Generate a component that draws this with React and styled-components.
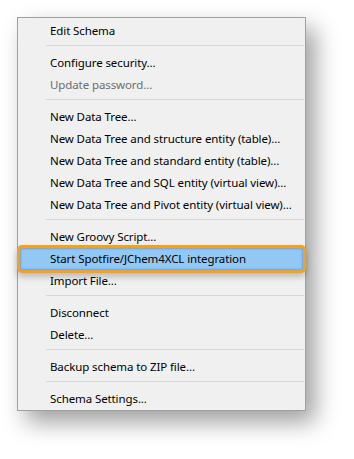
import React from "react";
import styled, { createGlobalStyle } from "styled-components";

const Global = createGlobalStyle`
  html, body { margin: 0; padding: 0; background: #ffffff; }
  body { width: 354px; height: 459px; overflow: hidden; }
`;

const Page = styled.div`
  padding: 17px 0 0 17px;
`;

const Menu = styled.div`
  width: 287px;
  border: 1px solid #a0a0a0;
  background: #f0f0f0;
  padding: 2px 0 0 0;
  box-shadow: 9px 11px 22px rgba(0, 0, 0, 0.38);
  font-family: "Noto Sans", "Segoe UI", sans-serif;
  font-size: 11.5px;
  letter-spacing: -0.1px;
  color: #000;
`;

const Item = styled.div`
  position: relative;
  height: 22px;
  line-height: 22px;
  margin: 0 2px;
  padding-left: 30px;
  white-space: nowrap;
  color: ${(p) => (p.$disabled ? "#6d6d6d" : "#000")};
  ${(p) =>
    p.$active &&
    `
    z-index: 1;
    background: #93c8f5;
    border-radius: 2px;
    box-shadow:
      0 0 0 3px #f7a01b,
      inset 0 0 2px 1px rgba(60, 120, 190, 0.45),
      0 4px 6px 3px rgba(0, 0, 0, 0.22);
  `}
`;

const Separator = styled.div`
  height: 10px;
  box-sizing: border-box;
  padding-top: 3px;
  margin: 0 1px 0 28px;
  &::before {
    content: "";
    display: block;
    height: 1px;
    background: #d7d7d7;
  }
`;

const groups = [
  [{ t: "Edit Schema" }],
  [{ t: "Configure security..." }, { t: "Update password...", disabled: true }],
  [
    { t: "New Data Tree..." },
    { t: "New Data Tree and structure entity (table)..." },
    { t: "New Data Tree and standard entity (table)..." },
    { t: "New Data Tree and SQL entity (virtual view)..." },
    { t: "New Data Tree and Pivot entity (virtual view)..." },
  ],
  [
    { t: "New Groovy Script..." },
    { t: "Start Spotfire/JChem4XCL integration", active: true },
    { t: "Import File..." },
  ],
  [{ t: "Disconnect" }, { t: "Delete..." }],
  [{ t: "Backup schema to ZIP file..." }],
  [{ t: "Schema Settings..." }],
];

export default function App() {
  return (
    <>
      <Global />
      <Page>
        <Menu>
          {groups.map((g, gi) => (
            <React.Fragment key={gi}>
              {gi > 0 && <Separator />}
              {g.map((it) => (
                <Item key={it.t} $disabled={it.disabled} $active={it.active}>
                  {it.t}
                </Item>
              ))}
            </React.Fragment>
          ))}
        </Menu>
      </Page>
    </>
  );
}
